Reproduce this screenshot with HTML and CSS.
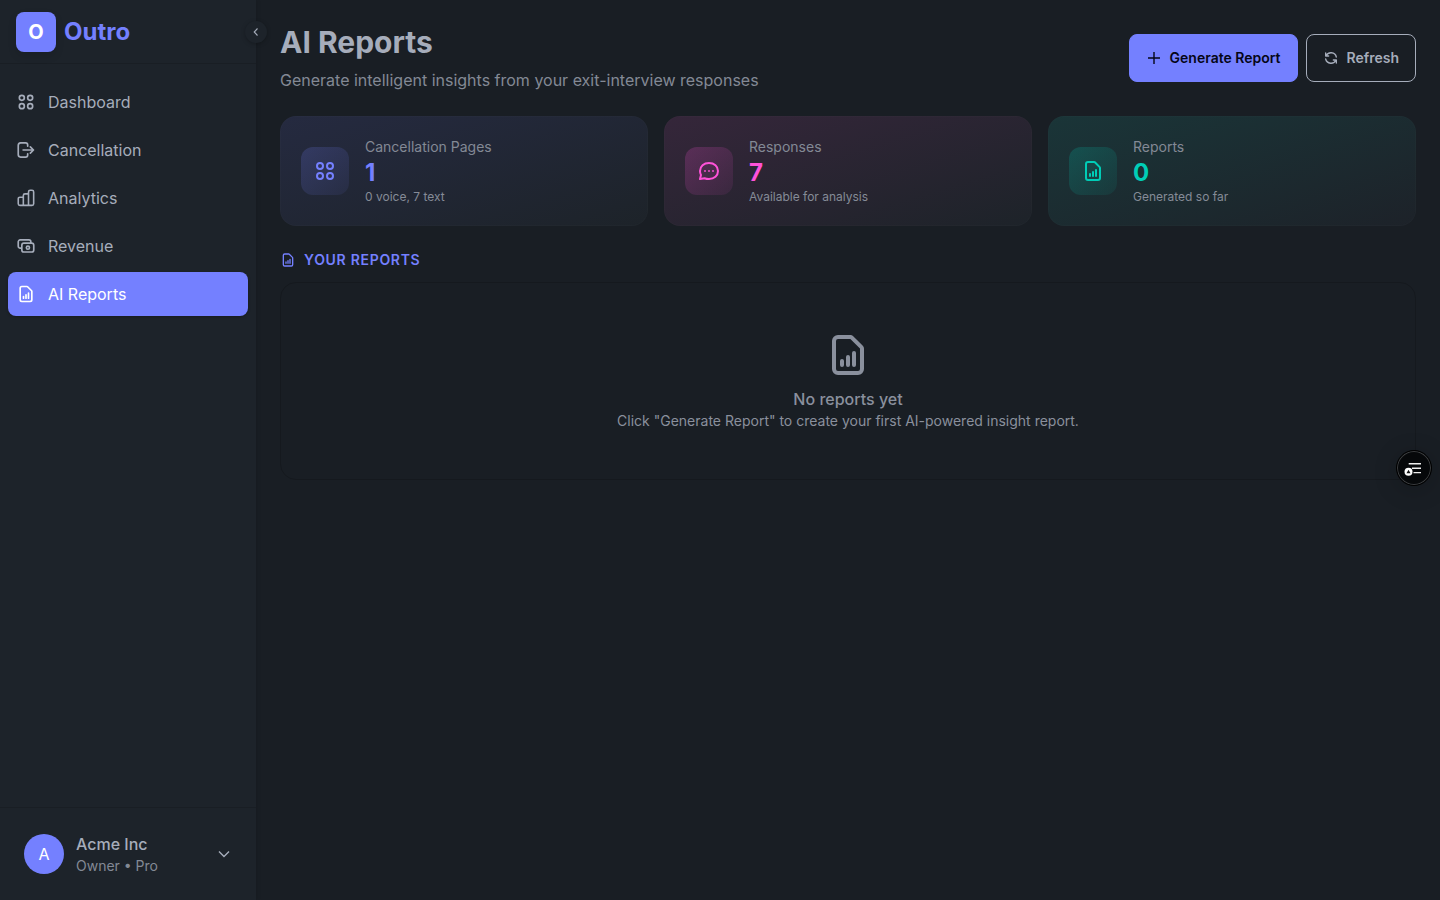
FILE: index.html
```html
<!DOCTYPE html>
<html lang="en">
<head>
<meta charset="utf-8">
<title>AI Reports</title>
<link rel="stylesheet" href="styles.css">
</head>
<body>
<svg class="sprite" aria-hidden="true">
  <defs>
    <symbol id="grid" viewBox="0 0 24 24"><g fill="none" stroke="currentColor" stroke-width="2"><circle cx="7" cy="7" r="3"/><circle cx="17" cy="7" r="3"/><circle cx="7" cy="17" r="3"/><circle cx="17" cy="17" r="3"/></g></symbol>
    <symbol id="exit" viewBox="0 0 24 24"><path fill="none" stroke="currentColor" stroke-width="2" stroke-linecap="round" stroke-linejoin="round" d="M14 7.500V6a2.500 2.500 0 0 0-2.500-2.500H5.500A3 3 0 0 0 2.700 6.500v11a3 3 0 0 0 2.800 3h6A2.500 2.500 0 0 0 14 18v-1.500M8.500 12h12M17.200 8.200l3.800 3.800-3.800 3.800"/></symbol>
    <symbol id="bars" viewBox="0 0 24 24"><path fill="none" stroke="currentColor" stroke-width="1.900" stroke-linejoin="round" d="M8.800 20.800H4.700a2 2 0 0 1-2-2v-5.800a2 2 0 0 1 2-2h4.100zM8.800 20.800V9a2 2 0 0 1 2-2H15v13.800zM15 20.800V4.700a2 2 0 0 1 2-2h2.200a2 2 0 0 1 2 2v14.100a2 2 0 0 1-2 2z"/></symbol>
    <symbol id="cash" viewBox="0 0 24 24"><g fill="none" stroke="currentColor" stroke-width="2" stroke-linejoin="round"><path d="M6.500 14.500H5A2.300 2.300 0 0 1 2.700 12V7A2.300 2.300 0 0 1 5 4.700h10.500A2.300 2.300 0 0 1 17.800 7v1.500"/><rect x="7" y="8.500" width="14.300" height="10.700" rx="2.500"/><circle cx="14.300" cy="14" r="1.900"/></g></symbol>
    <symbol id="report" viewBox="0 0 24 24"><path fill="none" stroke="currentColor" stroke-width="2" stroke-linecap="round" stroke-linejoin="round" d="M7 3h6.200a1 1 0 0 1 .7.300l4.800 4.800a1 1 0 0 1 .3.700V19a2 2 0 0 1-2 2H7a2 2 0 0 1-2-2V5a2 2 0 0 1 2-2zM9 15v2M12 13v4M15 11v6"/></symbol>
    <symbol id="chat" viewBox="0 0 24 24"><path fill="none" stroke="currentColor" stroke-width="2" stroke-linejoin="round" d="M12 4c5.200 0 9 3.300 9 8s-3.800 8-9 8c-1.800 0-3.200-.3-4.500-.8L3 20l1-4C3.300 14.800 3 13.400 3 12c0-4.700 3.800-8 9-8z"/><g fill="currentColor"><circle cx="8" cy="12" r=".9"/><circle cx="12" cy="12" r=".9"/><circle cx="16" cy="12" r=".9"/></g></symbol>
    <symbol id="refresh" viewBox="0 0 24 24"><path fill="none" stroke="currentColor" stroke-width="2" stroke-linecap="round" stroke-linejoin="round" d="M4 4.500V9h4.500M4.500 9A8.200 8.200 0 0 1 20 10.500M20 19.500V15h-4.500M19.500 15A8.200 8.200 0 0 1 4 13.500"/></symbol>
  </defs>
</svg>
<div class="app">
  <aside class="sidebar">
    <div class="brand"><span class="logo">O</span><span class="name">Outro</span></div>
    <nav class="nav">
      <a class="item"><svg><use href="#grid"/></svg>Dashboard</a>
      <a class="item"><svg><use href="#exit"/></svg>Cancellation</a>
      <a class="item"><svg><use href="#bars"/></svg>Analytics</a>
      <a class="item"><svg><use href="#cash"/></svg>Revenue</a>
      <a class="item active"><svg><use href="#report"/></svg>AI Reports</a>
    </nav>
    <div class="account">
      <span class="avatar">A</span>
      <div class="who"><div class="org">Acme Inc</div><div class="role">Owner • Pro</div></div>
      <svg class="caret" viewBox="0 0 16 16"><path d="M3 5.500l5 5 5-5"/></svg>
    </div>
    <button class="collapse"><svg viewBox="0 0 12 12"><path d="M7.500 2.500L4.200 6l3.300 3.500"/></svg></button>
  </aside>
  <main class="main">
    <header class="head">
      <div><h1>AI Reports</h1><p>Generate intelligent insights from your exit-interview responses</p></div>
      <div class="actions">
        <button class="btn primary"><svg viewBox="0 0 16 16"><path d="M8 2v12M2 8h12"/></svg>Generate Report</button>
        <button class="btn outline"><svg><use href="#refresh"/></svg>Refresh</button>
      </div>
    </header>
    <section class="stats">
      <article class="card violet"><span class="tile"><svg><use href="#grid"/></svg></span><div><div class="label">Cancellation Pages</div><div class="value">1</div><div class="note">0 voice, 7 text</div></div></article>
      <article class="card pink"><span class="tile"><svg><use href="#chat"/></svg></span><div><div class="label">Responses</div><div class="value">7</div><div class="note">Available for analysis</div></div></article>
      <article class="card teal"><span class="tile"><svg><use href="#report"/></svg></span><div><div class="label">Reports</div><div class="value">0</div><div class="note">Generated so far</div></div></article>
    </section>
    <h2><svg><use href="#report"/></svg>YOUR REPORTS</h2>
    <section class="empty">
      <svg><use href="#report"/></svg>
      <div class="title">No reports yet</div>
      <div class="hint">Click "Generate Report" to create your first AI-powered insight report.</div>
    </section>
  </main>
  <button class="widget"><svg viewBox="0 0 20 20"><path d="M4.700 5.700H17M8 10.200h9M9.500 14.600H17" stroke="#eee" stroke-width="1.400"/><circle cx="4.500" cy="13.700" r="4" fill="#fff"/><path d="M4.500 11.700l2 3.500h-4z" fill="#111"/></svg></button>
</div>
</body>
</html>
```
FILE: styles.css
```css
* { box-sizing: border-box; }
body { margin: 0; background: #191e24; color: #a6adbb; font: 16px/24px Inter, sans-serif; }
h1, h2, p { margin: 0; }
button { font: inherit; color: inherit; padding: 0; }
svg { display: block; flex: none; }
.sprite { position: absolute; width: 0; height: 0; }
.app { display: flex; height: 900px; position: relative; overflow: hidden; }
.sidebar { position: relative; z-index: 1; width: 256px; flex: none; display: flex; flex-direction: column; background: #1d232a; box-shadow: 1px 0 4px rgba(0,0,0,.12); }
.brand { height: 64px; display: flex; align-items: center; gap: 8px; padding: 0 16px; border-bottom: 1px solid #191e24; }
.logo { width: 40px; height: 40px; border-radius: 8px; background: #7480ff; color: #fff; display: grid; place-items: center; font-weight: 700; font-size: 20px; box-shadow: 0 4px 8px rgba(0,0,0,.12); }
.name { color: #7480ff; font-weight: 700; font-size: 24px; }
.nav { flex: 1; padding: 16px 8px; display: flex; flex-direction: column; gap: 4px; }
.item { height: 44px; padding: 0 8px; display: flex; align-items: center; gap: 12px; border-radius: 8px; }
.item svg { width: 20px; height: 20px; }
.active { background: #7480ff; color: #fff; box-shadow: 0 1px 3px rgba(0,0,0,.25); }
.account { height: 93px; border-top: 1px solid #191e24; display: flex; align-items: center; gap: 12px; padding: 0 24px; }
.avatar { width: 40px; height: 40px; border-radius: 50%; background: #7480ff; color: #fff; display: grid; place-items: center; }
.who { flex: 1; }
.org { font-weight: 500; }
.role { font-size: 14px; line-height: 20px; color: #838995; }
.caret { width: 16px; height: 16px; fill: none; stroke: currentColor; stroke-width: 1.400; }
.collapse { position: absolute; right: -11px; top: 21px; width: 22px; height: 22px; border: 0; border-radius: 50%; background: #1d232a; display: grid; place-items: center; box-shadow: 0 1px 4px rgba(0,0,0,.25); }
.collapse svg { width: 12px; height: 12px; fill: none; stroke: currentColor; stroke-width: 1.100; }
.main { flex: 1; padding: 24px; }
.head { display: flex; justify-content: space-between; align-items: center; height: 68px; }
h1 { font-size: 30px; line-height: 36px; font-weight: 700; }
.head p { margin-top: 8px; color: #838995; }
.actions { display: flex; gap: 8px; }
.btn { height: 48px; display: flex; align-items: center; gap: 8px; padding: 0 16px; border: 1px solid #a6adbb; border-radius: 8px; background: none; font-size: 14px; font-weight: 600; }
.btn svg { width: 16px; height: 16px; }
.primary { background: #7480ff; border-color: #7480ff; color: #050617; }
.primary svg { fill: none; stroke: currentColor; stroke-width: 1.400; }
.stats { display: grid; grid-template-columns: repeat(3, 1fr); gap: 16px; margin-top: 24px; }
.card { height: 110px; display: flex; align-items: center; gap: 16px; padding: 0 20px; border: 1px solid rgba(166,173,187,.025); border-radius: 16px; background-origin: border-box; }
.tile { width: 48px; height: 48px; border-radius: 12px; display: grid; place-items: center; }
.tile svg { width: 24px; height: 24px; }
.violet { background-image: linear-gradient(to bottom right, #252a40, #1d2329); }
.pink { background-image: linear-gradient(to bottom right, #35263a, #1d2329); }
.teal { background-image: linear-gradient(to bottom right, #1a3538, #1d2229); }
.violet .tile { background: linear-gradient(to bottom right, rgba(116,128,255,.2), rgba(116,128,255,.07)); }
.pink .tile { background: linear-gradient(to bottom right, rgba(255,82,217,.2), rgba(255,82,217,.07)); }
.teal .tile { background: linear-gradient(to bottom right, rgba(0,205,183,.2), rgba(0,205,183,.07)); }
.violet .tile, .violet .value { color: #7480ff; }
.pink .tile, .pink .value { color: #ff52d9; }
.teal .tile, .teal .value { color: #00cdb7; }
.label { font-size: 14px; line-height: 20px; color: #838995; }
.value { font-size: 24px; line-height: 32px; font-weight: 700; }
.note { font-size: 12px; line-height: 16px; color: #858b97; }
h2 { display: flex; align-items: center; gap: 8px; margin-top: 24px; color: #7480ff; font-size: 14px; line-height: 20px; font-weight: 600; letter-spacing: .7px; }
h2 svg { width: 16px; height: 16px; }
.empty { margin-top: 12px; height: 198px; border: 1px solid #15191e; border-radius: 16px; display: flex; flex-direction: column; align-items: center; padding-top: 48px; color: #8a909d; }
.empty svg { width: 48px; height: 48px; margin-bottom: 8px; }
.title { font-weight: 500; }
.hint { font-size: 14px; line-height: 20px; }
.widget { position: absolute; left: 1396px; top: 450px; width: 36px; height: 36px; border-radius: 50%; border: 1px solid #000; background: #06080a; display: grid; place-items: center; box-shadow: inset 0 0 0 1px #3c3e40, 0 4px 24px rgba(0,0,0,.2); }
.widget svg { width: 20px; height: 20px; overflow: visible; }
```
